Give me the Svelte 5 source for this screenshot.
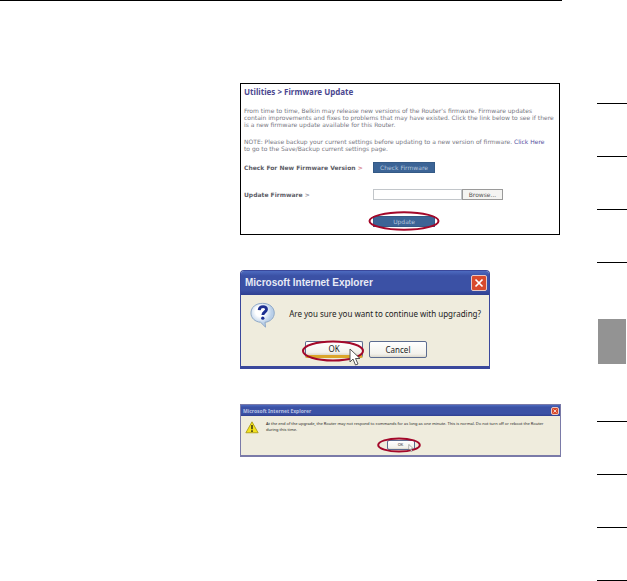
<script>
	let firmwarePath = $state('');

	// Section tabs printed on the outer edge of the page
	const tabs = [1, 2, 3, 4, 5, 6, 7, 8, 9];
	const currentTab = 5;
</script>

<div class="page">
	<main>
		<section class="panel">
			<h1>Utilities &gt; Firmware Update</h1>
			<p>
				From time to time, Belkin may release new versions of the Router's firmware. Firmware updates<br />
				contain improvements and fixes to problems that may have existed. Click the link below to see if there<br />
				is a new firmware update available for this Router.
			</p>
			<p>
				NOTE: Please backup your current settings before updating to a new version of firmware. <a href="#backup">Click Here</a><br />
				to go to the Save/Backup current settings page.
			</p>
			<div class="form-row">
				<span class="label">Check For New Firmware Version <b>&gt;</b></span>
				<button type="button" class="action">Check Firmware</button>
			</div>
			<div class="form-row">
				<label class="label" for="firmware">Update Firmware <i>&gt;</i></label>
				<div class="file">
					<input id="firmware" type="text" bind:value={firmwarePath} />
					<button type="button" class="browse">Browse...</button>
				</div>
			</div>
			<div class="form-row">
				<span></span>
				<div class="marked">
					<button type="button" class="action">Update</button>
					<svg class="ring ring-update" viewBox="0 0 72 20" aria-hidden="true">
						<ellipse cx="36" cy="10" rx="34.5" ry="8.7" />
					</svg>
				</div>
			</div>
		</section>

		<section class="dialog confirm">
			<header>
				<h2>Microsoft Internet Explorer</h2>
				<button type="button" class="close" aria-label="Close">
					<svg viewBox="0 0 16 16"><path d="M4 4l8 8M12 4l-8 8" /></svg>
				</button>
			</header>
			<div class="body">
				<div class="message">
					<svg class="question" viewBox="0 0 28 28" aria-hidden="true">
						<defs>
							<radialGradient id="bubble" cx="40%" cy="35%">
								<stop offset="0.4" stop-color="#fff" />
								<stop offset="1" stop-color="#b9cfe8" />
							</radialGradient>
						</defs>
						<path
							d="M14 2C7 2 2 6 2 12c0 5 4 9 10 9.500l5 5-.5-5C22 21 26 17 26 12 26 6 21 2 14 2z"
							fill="url(#bubble)"
							stroke="#8ba5c4"
						/>
						<path
							d="M10.500 9c.3-5 8-4.500 7.500-.5-.3 2.500-3.700 2.500-3.700 5.500"
							fill="none"
							stroke="#1d2f91"
							stroke-width="3"
						/>
						<circle cx="14.200" cy="17.300" r="1.700" fill="#1d2f91" />
					</svg>
					<p>Are you sure you want to continue with upgrading?</p>
				</div>
				<div class="buttons">
					<div class="marked">
						<button type="button" class="ok">OK</button>
						<svg class="ring ring-ok" viewBox="0 0 64 22" aria-hidden="true">
							<ellipse cx="32" cy="11" rx="30" ry="9.500" />
						</svg>
						<svg class="cursor" viewBox="0 0 12 18" aria-hidden="true">
							<path d="M1 1v13l3-3 2.500 6 2.500-1-2.500-5.500h4.500z" />
						</svg>
					</div>
					<button type="button">Cancel</button>
				</div>
			</div>
		</section>

		<section class="dialog notice">
			<header>
				<h2>Microsoft Internet Explorer</h2>
				<button type="button" class="close" aria-label="Close">
					<svg viewBox="0 0 16 16"><path d="M4 4l8 8M12 4l-8 8" /></svg>
				</button>
			</header>
			<div class="body">
				<div class="message">
					<svg class="warning" viewBox="0 0 16 16" aria-hidden="true">
						<path d="M8 1.500L15 14H1z" fill="#f4e21c" stroke="#a89a18" stroke-linejoin="round" />
						<path d="M8 5v5M8 11v2" stroke="#3d3a10" stroke-width="1.800" />
					</svg>
					<p>
						At the end of the upgrade, the Router may not respond to commands for as long as one minute. This is normal. Do not turn off or reboot the Router<br />
						during this time.
					</p>
				</div>
				<div class="buttons">
					<div class="marked">
						<button type="button">OK</button>
						<svg class="ring ring-notice" viewBox="0 0 44 16" aria-hidden="true">
							<ellipse cx="22" cy="8" rx="20.800" ry="6.500" />
						</svg>
						<svg class="cursor" viewBox="0 0 12 18" aria-hidden="true">
							<path d="M1 1v13l3-3 2.500 6 2.500-1-2.500-5.500h4.500z" />
						</svg>
					</div>
				</div>
			</div>
		</section>
	</main>

	<aside>
		{#each tabs as tab}
			<div class="tab" class:current={tab === currentTab}></div>
		{/each}
	</aside>
</div>

<style>
	:global(body) {
		background: #fff;
	}

	.page {
		display: flex;
		justify-content: space-between;
		font-family: 'DejaVu Sans', Verdana, sans-serif;
	}

	h1,
	h2,
	p {
		margin: 0;
		white-space: nowrap;
	}

	button,
	input {
		box-sizing: border-box;
		margin: 0;
		padding: 0;
		font: inherit;
	}

	svg {
		display: block;
	}

	main {
		flex: 1;
		margin-right: 35px;
		padding: 82px 2px 0 240px;
		border-top: 1px solid #000;
	}

	/* Firmware page */
	.panel {
		box-sizing: border-box;
		height: 152px;
		padding: 3px;
		border: 1px solid #000;
		font-size: 6px;
		line-height: 7px;
		color: #77777f;
	}

	h1 {
		margin-bottom: 10px;
		font: bold 8px/10px 'Noto Sans', sans-serif;
		color: #4c4890;
	}

	.panel p {
		margin-bottom: 10px;
	}

	.panel a {
		color: #5552a0;
		text-decoration: none;
	}

	.form-row {
		display: grid;
		grid-template-columns: 129px 1fr;
		align-items: center;
		margin-bottom: 16px;
	}

	.label {
		font-weight: bold;
		color: #5c5c66;
	}

	.label b {
		color: #d88a92;
	}

	.label i {
		font-style: normal;
		color: #9a9aa4;
	}

	.action {
		display: block;
		width: 62px;
		height: 11px;
		border: 1px solid #345a86;
		background: #3c6496;
		color: #b4c6dc;
		line-height: 8px;
	}

	.file {
		display: flex;
	}

	.file input {
		width: 89px;
		height: 11px;
		border: 1px solid #c2c6ca;
	}

	.browse {
		width: 41px;
		height: 11px;
		border: 1px solid #9a9a9a;
		background: #f4f4f2;
		color: #555;
		line-height: 8px;
	}

	.marked {
		position: relative;
		justify-self: start;
	}

	.ring {
		position: absolute;
		fill: none;
		stroke: #a3082a;
		stroke-width: 2;
		pointer-events: none;
	}

	.ring-update {
		top: -5px;
		left: -5px;
		width: 72px;
		height: 20px;
	}

	/* Windows XP message boxes */
	.dialog {
		box-sizing: border-box;
		border: 1px solid #3a489c;
		background: #efecdd;
		font-family: 'Noto Sans', Tahoma, sans-serif;
		color: #222;
	}

	.dialog header {
		display: flex;
		align-items: center;
		justify-content: space-between;
		background: linear-gradient(#4d6bc0, #3b51a5 20%, #3b51a5 80%, #2f3f90);
	}

	.dialog h2 {
		color: #e8ebf6;
	}

	.dialog button {
		display: block;
		border: 1px solid #5c6c90;
		border-radius: 2px;
		background: linear-gradient(#fff, #f3f2ec 80%, #dcd8cc);
		color: #222;
	}

	.dialog .close {
		border: 1px solid #e8c8c4;
		background: #d84a2c;
	}

	.close path {
		fill: none;
		stroke: #fff;
		stroke-width: 2;
	}

	.message {
		display: flex;
	}

	.buttons {
		display: flex;
		justify-content: center;
	}

	.cursor {
		position: absolute;
		fill: #fff;
		stroke: #555;
	}

	.confirm {
		width: 250px;
		margin-top: 35px;
		border-bottom-width: 3px;
		border-radius: 4px 4px 0 0;
		font-size: 8px;
		line-height: 10px;
	}

	.confirm header {
		height: 24px;
		padding: 0 2px 0 4px;
		border-radius: 3px 3px 0 0;
	}

	.confirm h2 {
		font: bold 10px/12px 'Liberation Sans', Arial, sans-serif;
	}

	.confirm .close {
		width: 16px;
		height: 16px;
	}

	.confirm .message {
		gap: 13px;
		padding: 6px 8px 0;
	}

	.confirm p {
		padding-top: 8px;
	}

	.question {
		width: 28px;
		height: 28px;
	}

	.confirm .buttons {
		gap: 6px;
		padding: 12px 0 8px 2px;
	}

	.confirm .buttons button {
		width: 58px;
		height: 17px;
	}

	.confirm .buttons .ok {
		border-bottom: 3px solid #dba52a;
	}

	.ring-ok {
		top: -1px;
		left: -4px;
		width: 64px;
		height: 22px;
	}

	.confirm .cursor {
		top: 7px;
		left: 44px;
		width: 12px;
		height: 18px;
	}

	.notice {
		margin-top: 35px;
		margin-right: -1px;
		border-bottom-width: 2px;
		border-color: #7a7aa8;
		font-size: 4px;
		line-height: 6px;
	}

	.notice header {
		height: 11px;
		padding: 0 1px 0 2px;
	}

	.notice h2 {
		font-size: 5px;
		line-height: 6px;
		color: #b9c1e2;
	}

	.notice .close {
		width: 8px;
		height: 8px;
	}

	.notice .message {
		gap: 7px;
		padding: 4px 4px 0;
	}

	.notice p {
		padding-top: 1px;
	}

	.warning {
		width: 14px;
		height: 15px;
	}

	.notice .buttons {
		padding: 5px 0;
	}

	.notice .buttons button {
		width: 28px;
		height: 10px;
	}

	.ring-notice {
		top: -3px;
		left: -10px;
		width: 44px;
		height: 16px;
	}

	.notice .cursor {
		top: 4px;
		left: 21px;
		width: 6px;
		height: 8px;
	}

	/* Page edge tabs */
	aside {
		width: 30px;
		padding-top: 103px;
	}

	.tab {
		height: 52px;
		border-top: 1px solid #000;
	}

	.current {
		height: 45px;
		margin: 3px 1px 57px;
		border: none;
		background: #939393;
	}

	.tab:nth-child(4) {
		height: 53px;
	}

	.tab:last-child {
		height: 0;
	}
</style>
